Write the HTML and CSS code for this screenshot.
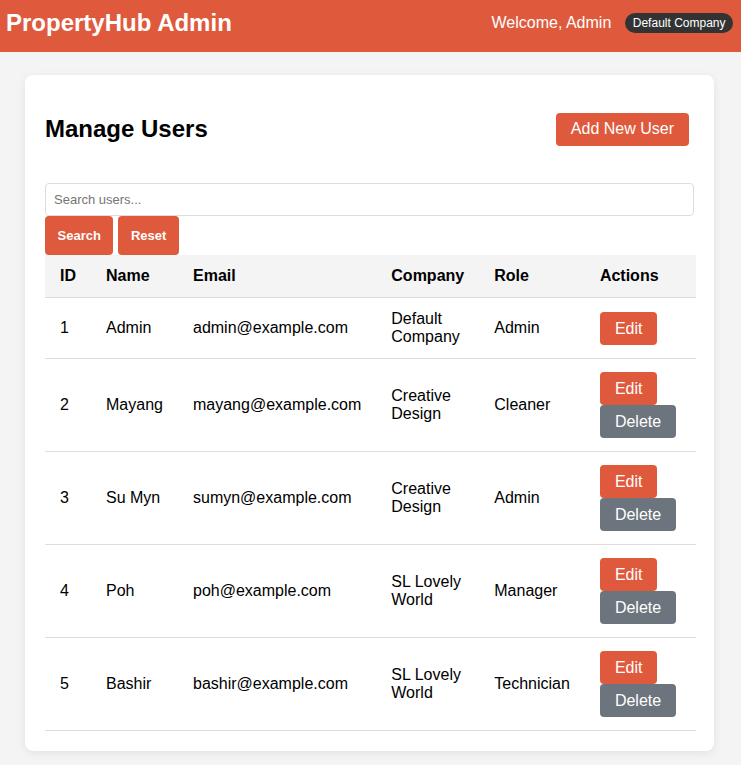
FILE: index.html
```html
<!DOCTYPE html>
<html lang="en">
<head>
<meta charset="utf-8">
<title>PropertyHub Admin - Manage Users</title>
<link rel="stylesheet" href="styles.css">
</head>
<body>
<header class="topbar">
  <div class="brand">PropertyHub Admin</div>
  <div class="user-info">
    <span class="welcome">Welcome, Admin</span>
    <span class="company-badge">Default Company</span>
  </div>
</header>
<main class="main">
  <section class="card">
    <div class="card-head">
      <h2 class="title">Manage Users</h2>
      <button class="btn btn-primary btn-add">Add New User</button>
    </div>
    <form class="search-form">
      <input class="search-input" type="text" placeholder="Search users...">
      <div class="search-actions">
        <button type="button" class="btn btn-primary btn-small">Search</button>
        <button type="button" class="btn btn-primary btn-small">Reset</button>
      </div>
    </form>
    <table class="users">
      <thead>
        <tr>
          <th class="c-id">ID</th>
          <th class="c-name">Name</th>
          <th class="c-email">Email</th>
          <th class="c-company">Company</th>
          <th class="c-role">Role</th>
          <th class="c-actions">Actions</th>
        </tr>
      </thead>
      <tbody>
        <tr>
          <td>1</td><td>Admin</td><td>admin@example.com</td><td>Default Company</td><td>Admin</td>
          <td class="act-cell"><div class="actions"><button class="btn btn-primary btn-act">Edit</button></div></td>
        </tr>
        <tr>
          <td>2</td><td>Mayang</td><td>mayang@example.com</td><td>Creative Design</td><td>Cleaner</td>
          <td class="act-cell"><div class="actions"><button class="btn btn-primary btn-act">Edit</button><button class="btn btn-danger btn-act">Delete</button></div></td>
        </tr>
        <tr>
          <td>3</td><td>Su Myn</td><td>sumyn@example.com</td><td>Creative Design</td><td>Admin</td>
          <td class="act-cell"><div class="actions"><button class="btn btn-primary btn-act">Edit</button><button class="btn btn-danger btn-act">Delete</button></div></td>
        </tr>
        <tr>
          <td>4</td><td>Poh</td><td>poh@example.com</td><td>SL Lovely World</td><td>Manager</td>
          <td class="act-cell"><div class="actions"><button class="btn btn-primary btn-act">Edit</button><button class="btn btn-danger btn-act">Delete</button></div></td>
        </tr>
        <tr>
          <td>5</td><td>Bashir</td><td>bashir@example.com</td><td>SL Lovely World</td><td>Technician</td>
          <td class="act-cell"><div class="actions"><button class="btn btn-primary btn-act">Edit</button><button class="btn btn-danger btn-act">Delete</button></div></td>
        </tr>
      </tbody>
    </table>
  </section>
</main>
</body>
</html>
```
FILE: styles.css
```css
* { box-sizing: border-box; }
html, body {
  margin: 0;
  padding: 0;
  background: #f4f4f4;
  font-family: "Liberation Sans", Arial, Helvetica, sans-serif;
  color: #000;
}
.topbar {
  height: 52px;
  background: #df5a3c;
  color: #fff;
  display: flex;
  align-items: center;
  justify-content: space-between;
  padding: 0 8px 6px 6px;
}
.brand {
  font-size: 24px;
  font-weight: bold;
}
.user-info {
  display: flex;
  align-items: center;
}
.welcome { font-size: 16px; }
.company-badge {
  margin-left: 14px;
  background: #333;
  color: #fff;
  font-size: 12px;
  padding: 3px 7.5px;
  border-radius: 10px;
  line-height: 14px;
}
.main {
  padding: 23px 27px 14px 25px;
}
.card {
  background: #fff;
  border-radius: 8px;
  box-shadow: 0 2px 8px rgba(0,0,0,0.08);
  padding: 20px 20px 20px 20px;
}
.card-head {
  display: flex;
  align-items: center;
  justify-content: space-between;
}
.title {
  font-size: 24px;
  font-weight: bold;
  margin: 20px 0;
  line-height: 28px;
}
.btn {
  font-family: "Liberation Sans", Arial, Helvetica, sans-serif;
  border: none;
  color: #fff;
  border-radius: 4px;
  cursor: pointer;
}
.btn-primary { background: #df5a3c; }
.btn-danger { background: #6c757d; }
.btn-add {
  font-size: 16px;
  line-height: 18px;
  padding: 7px 15px 8px;
  margin-right: 5px;
}
.search-form {
  margin-top: 20px;
}
.search-input {
  display: block;
  width: 100%;
  height: 33px;
  border: 1px solid #ddd;
  border-radius: 4px;
  padding: 6px 8px;
  font-family: "Liberation Sans", Arial, Helvetica, sans-serif;
  font-size: 13px;
  color: #000;
}
.search-input::placeholder { color: #757575; }
.search-actions {
  display: flex;
  gap: 5px;
}
.btn-small {
  font-size: 13px;
  font-weight: bold;
  line-height: 16px;
  height: 39px;
  padding: 11px 12.5px;
}
.users {
  width: calc(100% + 2px);
  border-collapse: collapse;
  font-size: 16px;
}
.users th, .users td {
  text-align: left;
  vertical-align: middle;
  padding: 12px 15px;
  border-bottom: 1px solid #ddd;
  line-height: 18px;
}
.users td.act-cell {
  padding-top: 13px;
  padding-bottom: 13px;
}
.users th {
  background: #f4f4f4;
  font-weight: bold;
}
.c-id { width: 46px; }
.c-name { width: 87px; }
.c-email { width: 198px; }
.c-company { width: 103px; }
.c-role { width: 105px; }
.c-actions { width: 112px; }
.actions {
  display: flex;
  flex-direction: column;
  align-items: flex-start;
}
.btn-act {
  font-size: 16px;
  line-height: 19px;
  height: 33px;
  padding: 7px 15px;
}
```
